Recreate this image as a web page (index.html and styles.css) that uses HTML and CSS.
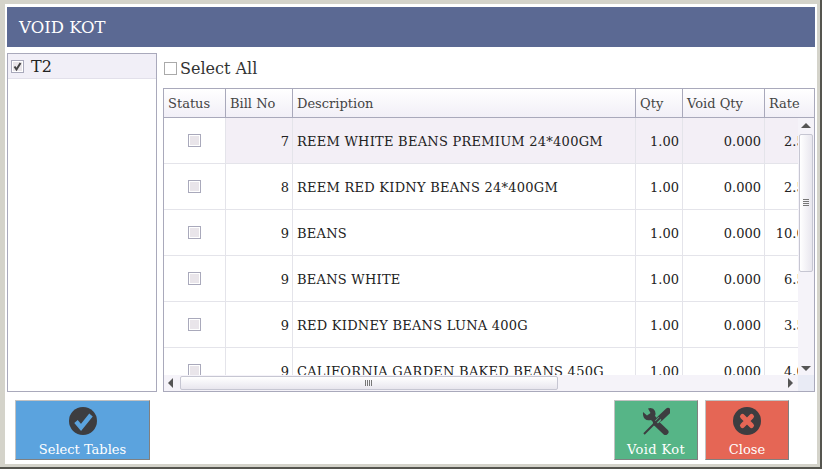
FILE: index.html
```html
<!DOCTYPE html>
<html lang="en">
<head>
    <meta charset="UTF-8">
    <title>Void KOT</title>
    <link rel="stylesheet" href="styles.css">
</head>
<body>

    <div class="window">
        <div class="title-bar">VOID KOT</div>

        <div class="main">
            <div class="table-list">
                <div class="table-item">
                    <span class="check checked">
                        <svg viewBox="0 0 13 13" width="13" height="13"><path d="M3.500 6.500 L5.500 9.500 L9.500 3" fill="none" stroke="#444" stroke-width="2"/></svg>
                    </span>
                    <span>T2</span>
                </div>
            </div>

            <div class="content">
                <div class="select-all">
                    <span class="box"></span>
                    <span>Select All</span>
                </div>

                <div class="grid-wrap">
                    <div class="grid-head">
                        <div class="cell col-status">Status</div>
                        <div class="cell col-bill">Bill No</div>
                        <div class="cell col-desc">Description</div>
                        <div class="cell col-qty">Qty</div>
                        <div class="cell col-void">Void Qty</div>
                        <div class="cell col-rate">Rate</div>
                    </div>

                    <div class="grid-body">
                        <div class="row first">
                            <div class="cell col-status"><span class="check"></span></div>
                            <div class="cell col-bill num">7</div>
                            <div class="cell col-desc">REEM WHITE BEANS PREMIUM 24*400GM</div>
                            <div class="cell col-qty num">1.00</div>
                            <div class="cell col-void num">0.000</div>
                            <div class="cell col-rate num">2.50</div>
                        </div>
                        <div class="row">
                            <div class="cell col-status"><span class="check"></span></div>
                            <div class="cell col-bill num">8</div>
                            <div class="cell col-desc">REEM RED KIDNY BEANS 24*400GM</div>
                            <div class="cell col-qty num">1.00</div>
                            <div class="cell col-void num">0.000</div>
                            <div class="cell col-rate num">2.50</div>
                        </div>
                        <div class="row">
                            <div class="cell col-status"><span class="check"></span></div>
                            <div class="cell col-bill num">9</div>
                            <div class="cell col-desc">BEANS</div>
                            <div class="cell col-qty num">1.00</div>
                            <div class="cell col-void num">0.000</div>
                            <div class="cell col-rate num">10.00</div>
                        </div>
                        <div class="row">
                            <div class="cell col-status"><span class="check"></span></div>
                            <div class="cell col-bill num">9</div>
                            <div class="cell col-desc">BEANS WHITE</div>
                            <div class="cell col-qty num">1.00</div>
                            <div class="cell col-void num">0.000</div>
                            <div class="cell col-rate num">6.50</div>
                        </div>
                        <div class="row">
                            <div class="cell col-status"><span class="check"></span></div>
                            <div class="cell col-bill num">9</div>
                            <div class="cell col-desc">RED KIDNEY BEANS LUNA 400G</div>
                            <div class="cell col-qty num">1.00</div>
                            <div class="cell col-void num">0.000</div>
                            <div class="cell col-rate num">3.50</div>
                        </div>
                        <div class="row">
                            <div class="cell col-status"><span class="check"></span></div>
                            <div class="cell col-bill num">9</div>
                            <div class="cell col-desc">CALIFORNIA GARDEN BAKED BEANS 450G</div>
                            <div class="cell col-qty num">1.00</div>
                            <div class="cell col-void num">0.000</div>
                            <div class="cell col-rate num">4.00</div>
                        </div>

                        <!-- scrollbars sit over the rows -->
                        <div class="vscroll">
                            <span class="arrow up"></span>
                            <div class="vthumb"><span class="grip"></span></div>
                            <span class="arrow down"></span>
                        </div>
                        <div class="hscroll">
                            <span class="arrow left"></span>
                            <div class="hthumb"><span class="grip-h"></span></div>
                            <span class="arrow right"></span>
                        </div>
                        <div class="corner"></div>
                    </div>
                </div>
            </div>
        </div>

        <div class="actions">
            <button class="btn btn-blue">
                <svg viewBox="0 0 28 28" width="28" height="28">
                    <circle cx="14" cy="14" r="14" fill="#3d3d40"/>
                    <path d="M7 14.500 L12 20.500 L22 8" fill="none" stroke="#5ba3de" stroke-width="4.500"/>
                </svg>
                <span>Select Tables</span>
            </button>
            <div class="actions-right">
                <button class="btn btn-green">
                    <svg viewBox="0 0 28 28" width="28" height="28">
                        <path d="M1 5 L5 8.500 L8.500 6 L6 1.500 Q11 0 13 4 Q14 6.500 13 9 L18 14 L14 18 L9 13 Q5 14 3 12 Q0.500 9.500 1 5 Z" fill="#3d3d40"/>
                        <path d="M14 16 L23.500 25" fill="none" stroke="#3d3d40" stroke-width="6" stroke-linecap="round"/>
                        <path d="M26 4 L18 11.500" fill="none" stroke="#3d3d40" stroke-width="6" stroke-linecap="round"/>
                        <path d="M18 11.500 L14.500 15" fill="none" stroke="#56b587" stroke-width="4"/>
                        <path d="M18 11 L2 27" fill="none" stroke="#3d3d40" stroke-width="2"/>
                    </svg>
                    <span class="wide">Void Kot</span>
                </button>
                <button class="btn btn-red">
                    <svg viewBox="0 0 28 28" width="28" height="28">
                        <circle cx="14" cy="14" r="14" fill="#3d3d40"/>
                        <path d="M9.500 9.500 L18.500 18.500 M18.500 9.500 L9.500 18.500" stroke="#e56655" stroke-width="5" stroke-linecap="round"/>
                    </svg>
                    <span>Close</span>
                </button>
            </div>
        </div>
    </div>

</body>
</html>
```

FILE: styles.css
```css
* {
    margin: 0;
    padding: 0;
    box-sizing: border-box;
}

body {
    width: 822px;
    height: 469px;
    overflow: hidden;
    font-family: 'DejaVu Serif', serif;
    font-size: 13px;
    color: #333;
    background-color: #55554f;
}

.window {
    width: 820px;
    height: 467px;
    padding: 3px 0 0 2px;
    background-color: #fff;
    border: 3px solid #d4d3ca;
    border-top-width: 4px;
    border-left-width: 5px;
    display: flex;
    flex-direction: column;
}

.title-bar {
    height: 40px;
    margin-right: 2px;
    padding-left: 12px;
    background-color: #5b6993;
    color: #fff;
    font-size: 16.500px;
    line-height: 42px;
    flex-shrink: 0;
}

.main {
    display: flex;
    gap: 6px;
    margin-top: 6px;
    margin-right: 2px;
    height: 339px;
    flex-shrink: 0;
}

.table-list {
    width: 150px;
    flex-shrink: 0;
    border: 1px solid #a9a9bb;
    background-color: #fff;
}

.table-item {
    height: 25px;
    background-color: #f1eff7;
    border-bottom: 1px solid #e2e0ea;
    display: flex;
    align-items: center;
    gap: 7px;
    padding-left: 3px;
    font-size: 16px;
    color: #222;
}

.check {
    display: inline-block;
    width: 13px;
    height: 13px;
    border: 1px solid #a9a9bb;
    background-color: #e9e5ea;
    box-shadow: inset 0 0 0 1px #fff;
}

.check svg {
    display: block;
    margin: -1px;
}

.content {
    flex: 1;
    min-width: 0;
    display: flex;
    flex-direction: column;
}

.select-all {
    height: 35px;
    flex-shrink: 0;
    display: flex;
    align-items: center;
    gap: 3px;
    font-size: 16px;
    padding: 0 0 4px 1px;
}

.box {
    width: 13px;
    height: 13px;
    border: 1px solid #aaa;
}

.grid-wrap {
    flex: 1;
    min-height: 0;
    border: 1px solid #a9a9bb;
    display: flex;
    flex-direction: column;
    overflow: hidden;
}

.grid-head {
    height: 29px;
    display: flex;
    flex-shrink: 0;
    background: linear-gradient(#fff, #f1eff7);
    border-bottom: 1px solid #a9a9bb;
    color: #444;
}

.grid-head .cell {
    border-right: 1px solid #a9a9bb;
    padding-left: 4px;
    line-height: 29px;
}

.grid-head .cell:last-child {
    border-right: none;
}

.grid-body {
    position: relative;
    flex: 1;
    overflow: hidden;
}

.row {
    height: 46px;
    display: flex;
    border-bottom: 1px solid #e4e4ea;
    color: #222;
}

.row.first .col-bill,
.row.first .col-desc,
.row.first .col-qty,
.row.first .col-void,
.row.first .col-rate {
    background-color: #f3eff6;
}

.row .cell {
    border-right: 1px solid #e4e4ea;
    padding: 0 3px 0 4px;
    line-height: 47px;
    white-space: nowrap;
    overflow: hidden;
}

.row .col-desc {
    letter-spacing: 0.250px;
}

.row .col-rate {
    padding-right: 1px;
    overflow: visible;
}

.num {
    text-align: right;
}

.col-status { width: 62px; flex-shrink: 0; }
.col-bill { width: 67px; flex-shrink: 0; }
.col-desc { width: 343px; flex-shrink: 0; }
.col-qty { width: 47px; flex-shrink: 0; }
.col-void { width: 82px; flex-shrink: 0; }
.col-rate { width: 50px; flex-shrink: 0; }

.row .col-status {
    display: flex;
    align-items: center;
    justify-content: center;
    padding: 0 5px 0 4px;
}

.vscroll {
    position: absolute;
    top: 0;
    right: 0;
    bottom: 16px;
    width: 16px;
    background-color: #f5f3f9;
}

.hscroll {
    position: absolute;
    left: 0;
    right: 16px;
    bottom: 0;
    height: 16px;
    background-color: #f5f3f9;
}

.corner {
    position: absolute;
    right: 0;
    bottom: 0;
    width: 16px;
    height: 16px;
    background-color: #e9ebf5;
}

.vthumb {
    position: absolute;
    top: 16px;
    left: 1px;
    width: 14px;
    height: 138px;
    border: 1px solid #c6c6d2;
    border-radius: 2px;
    background: linear-gradient(90deg, #fff, #e8e6ee);
}

.hthumb {
    position: absolute;
    left: 16px;
    top: 1px;
    width: 378px;
    height: 14px;
    border: 1px solid #c6c6d2;
    border-radius: 2px;
    background: linear-gradient(#fff, #e8e6ee);
}

.grip {
    position: absolute;
    left: 3px;
    right: 3px;
    top: 64px;
    height: 7px;
    background: repeating-linear-gradient(#777 0, #777 1px, transparent 1px, transparent 2px);
}

.grip-h {
    position: absolute;
    top: 3px;
    bottom: 3px;
    left: 184px;
    width: 7px;
    background: repeating-linear-gradient(90deg, #777 0, #777 1px, transparent 1px, transparent 2px);
}

.arrow {
    position: absolute;
    width: 0;
    height: 0;
    border-style: solid;
    border-color: transparent;
}

.arrow.up {
    top: 5px;
    left: 3px;
    border-width: 0 5px 5px 5px;
    border-bottom-color: #555;
}

.arrow.down {
    bottom: 4px;
    left: 3px;
    border-width: 5px 5px 0 5px;
    border-top-color: #555;
}

.arrow.left {
    top: 3px;
    left: 4px;
    border-width: 5px 5px 5px 0;
    border-right-color: #555;
}

.arrow.right {
    top: 3px;
    right: 5px;
    border-width: 5px 0 5px 5px;
    border-left-color: #555;
}

.actions {
    display: flex;
    justify-content: space-between;
    margin-top: 8px;
    padding: 0 28px 0 8px;
}

.actions-right {
    display: flex;
    gap: 7px;
}

.btn {
    width: 135px;
    height: 60px;
    border: 1px solid #c2c2c2;
    border-right-color: #808080;
    border-bottom-color: #808080;
    color: #fff;
    font-family: 'DejaVu Serif', serif;
    font-size: 13px;
    display: flex;
    flex-direction: column;
    align-items: center;
    justify-content: flex-start;
    padding-top: 6px;
    gap: 7px;
}

.wide {
    letter-spacing: 0.400px;
}

.btn-blue { background-color: #5ba3de; }
.btn-green { background-color: #56b587; width: 84px; }
.btn-red { background-color: #e56655; width: 84px; }
```
